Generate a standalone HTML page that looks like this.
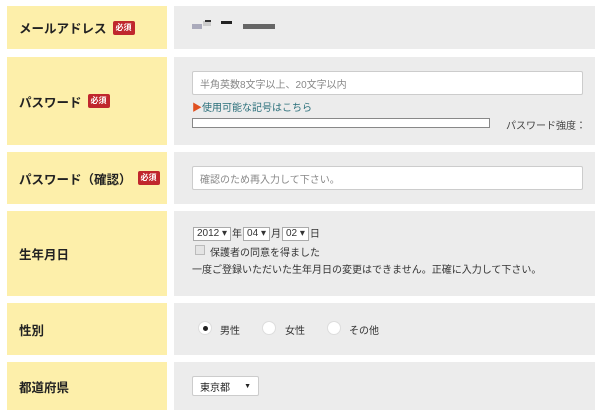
<!DOCTYPE html>
<html><head><meta charset="utf-8"><style>
*{margin:0;padding:0;box-sizing:border-box}
body{width:600px;height:416px;background:#fff;position:relative;font-family:"Liberation Sans","Noto Sans CJK JP",sans-serif;color:#333;overflow:hidden}
.l{position:absolute;left:7px;width:160px;background:#fdefaa;font-weight:bold;font-size:12.5px;color:#222;display:flex;align-items:center;padding-left:12px;white-space:nowrap}
.r{position:absolute;left:174px;width:421px;background:#ececec}
.b{display:inline-block;background:#c0272d;color:#fff;font-size:8px;padding:2px 3px;border-radius:2px;margin-left:6px;line-height:10px}
.a{position:absolute;white-space:nowrap}
.in{position:absolute;background:#fff;border:1px solid #ccc;border-radius:2px;font-size:10px;color:#888;padding-left:7px;display:flex;align-items:center}
.s{display:inline-block;background:#fff;border:1px solid #aaa;font-size:10px;padding:0 3px;height:14px;line-height:12px;vertical-align:middle;margin:0 1px}
.rad{position:absolute;width:14px;height:14px;border-radius:50%;background:#fff;border:1px solid #ddd}
.t{font-size:10px;color:#333}
</style></head><body>
<div class="l" style="top:6px;height:43px">メールアドレス<span class="b">必須</span></div>
<div class="r" style="top:6px;height:43px"></div>
<div class="a" style="left:192px;top:24px;width:10px;height:5px;background:#aab"></div>
<div class="a" style="left:203px;top:21px;width:8px;height:5px;background:#ccc"></div>
<div class="a" style="left:205px;top:20px;width:6px;height:2px;background:#333"></div>
<div class="a" style="left:221px;top:21px;width:11px;height:3px;background:#222"></div>
<div class="a" style="left:243px;top:24px;width:32px;height:5px;background:#666"></div>

<div class="l" style="top:57px;height:88px">パスワード<span class="b">必須</span></div>
<div class="r" style="top:57px;height:88px"></div>
<div class="in" style="left:192px;top:71px;width:391px;height:24px">半角英数8文字以上、20文字以内</div>
<div class="a t" style="left:192px;top:99px;color:#2a6f7a"><span style="color:#e05020">▶</span>使用可能な記号はこちら</div>
<div class="a" style="left:192px;top:118px;width:298px;height:10px;background:#fff;border:1px solid #888"></div>
<div class="a t" style="left:506px;top:117px;color:#444">パスワード強度：</div>

<div class="l" style="top:152px;height:52px">パスワード（確認）<span class="b">必須</span></div>
<div class="r" style="top:152px;height:52px"></div>
<div class="in" style="left:192px;top:166px;width:391px;height:24px">確認のため再入力して下さい。</div>

<div class="l" style="top:211px;height:85px">生年月日</div>
<div class="r" style="top:211px;height:85px"></div>
<div class="a t" style="left:192px;top:225px"><span class="s">2012 ▾</span>年<span class="s">04 ▾</span>月<span class="s">02 ▾</span>日</div>
<div class="a" style="left:195px;top:245px;width:10px;height:10px;background:#e4e4e4;border:1px solid #bbb"></div>
<div class="a t" style="left:210px;top:244px">保護者の同意を得ました</div>
<div class="a t" style="left:192px;top:261px">一度ご登録いただいた生年月日の変更はできません。正確に入力して下さい。</div>

<div class="l" style="top:303px;height:52px">性別</div>
<div class="r" style="top:303px;height:52px"></div>
<div class="rad" style="left:198px;top:321px"></div><div class="a" style="left:203px;top:326px;width:5px;height:5px;border-radius:50%;background:#222"></div>
<div class="a t" style="left:220px;top:322px">男性</div>
<div class="rad" style="left:262px;top:321px"></div>
<div class="a t" style="left:285px;top:322px">女性</div>
<div class="rad" style="left:327px;top:321px"></div>
<div class="a t" style="left:349px;top:322px">その他</div>

<div class="l" style="top:362px;height:48px">都道府県</div>
<div class="r" style="top:362px;height:48px"></div>
<div class="in" style="left:192px;top:376px;width:67px;height:20px;color:#222">東京都<span style="position:absolute;right:7px;font-size:7px">▼</span></div>
</body></html>
